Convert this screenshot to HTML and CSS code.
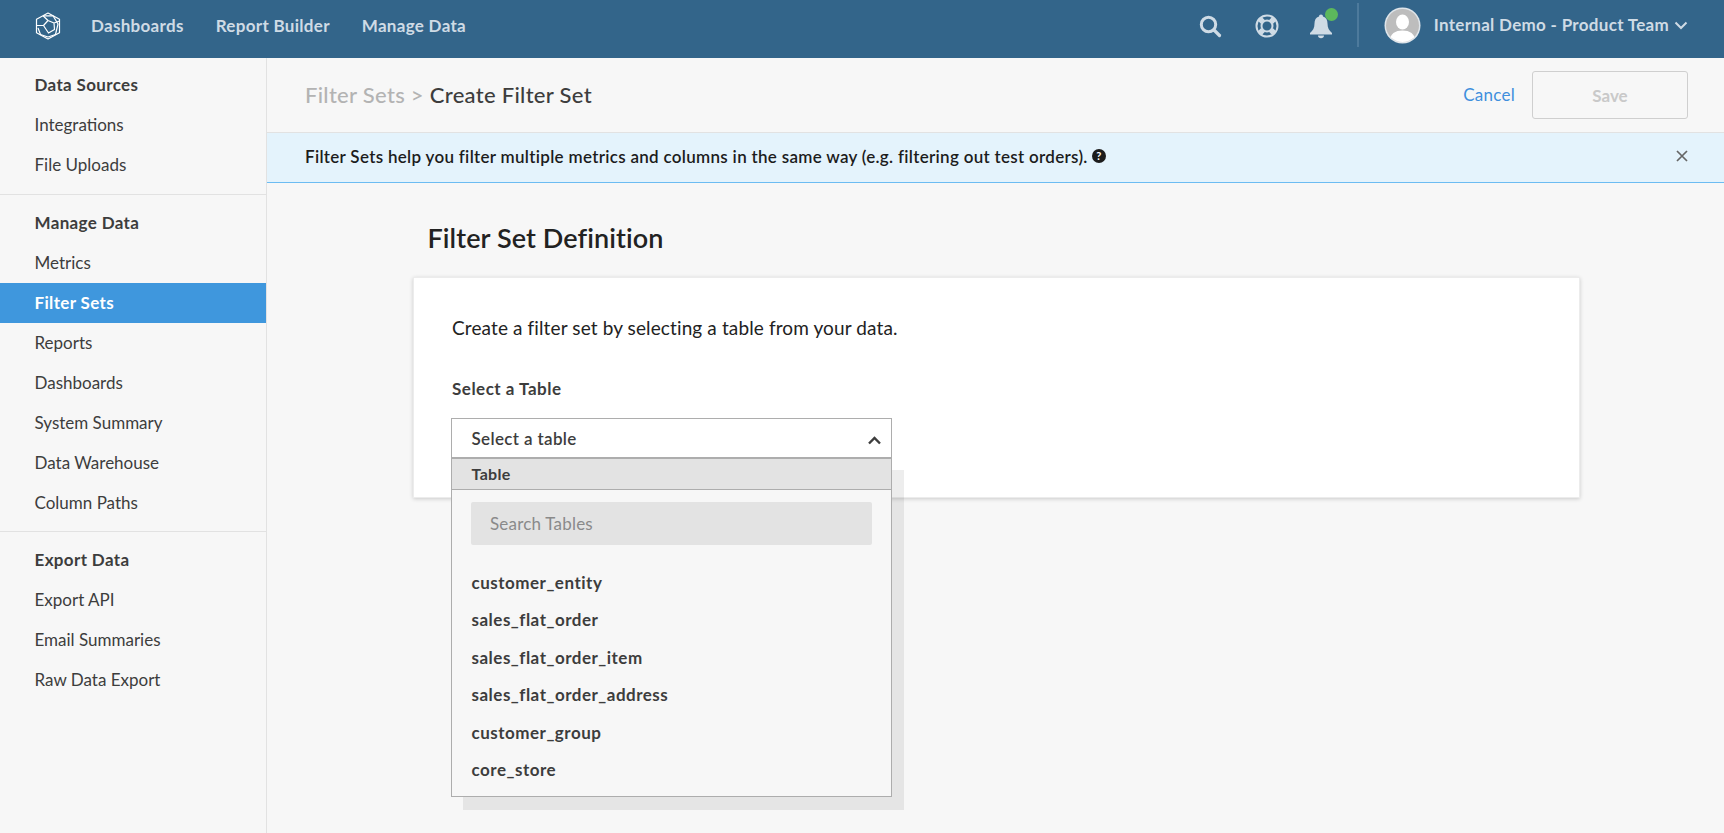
FILE: index.html
```html
<!DOCTYPE html>
<html lang="en">
<head>
<meta charset="utf-8">
<title>Create Filter Set</title>
<link rel="stylesheet" href="styles.css">
</head>
<body>
<header class="topbar">
  <svg class="logo" width="26" height="28" viewBox="0 0 26 28" fill="none" stroke="#fff" stroke-width="1.2" stroke-linejoin="round">
    <path d="M13 1 L24.500 7.200 V20.800 L13 27 L1.500 20.800 V7.200 Z"/>
    <path d="M8 3.800 L18 3.800 L23 12 L20.500 22.500 L13 25 L5.500 22.500 L3 16"/>
    <path d="M1.500 13.500 H8.500 L13 8.500 L19 11 L19.500 17.500 L13.500 21 L8.500 13.500 M13 8.500 L8 3.800 M19 11 L24.500 9"/>
  </svg>
  <nav class="mainnav">
    <a>Dashboards</a>
    <a>Report Builder</a>
    <a>Manage Data</a>
  </nav>
  <div class="tools">
    <svg class="tool-search" width="24" height="24" viewBox="0 0 24 24" fill="none" stroke="#cfdbe5" stroke-linecap="round">
      <circle cx="10.500" cy="10.500" r="7.200" stroke-width="3"/>
      <path d="M16 16 L21.500 21.500" stroke-width="3.200"/>
    </svg>
    <svg class="tool-help" width="24" height="24" viewBox="0 0 24 24" fill="none" stroke="#cfdbe5">
      <circle cx="12" cy="12" r="10.500" stroke-width="2"/>
      <circle cx="12" cy="12" r="5.500" stroke-width="2"/>
      <path d="M15.900 8.100 L19.400 4.600 M8.100 8.100 L4.600 4.600 M15.900 15.900 L19.400 19.400 M8.100 15.900 L4.600 19.400" stroke-width="5.500"/>
    </svg>
    <span class="bell">
      <svg width="24" height="26" viewBox="0 0 24 26" fill="#cfdbe5">
        <path d="M12 1.500 C13.200 1.500 14 2.400 14 3.400 C17.200 4.400 18.500 7 18.500 10.500 C18.500 15 20 17.500 23 20 V21.500 H1 V20 C4 17.500 5.500 15 5.500 10.500 C5.500 7 6.800 4.400 10 3.400 C10 2.400 10.800 1.500 12 1.500 Z"/>
        <path d="M9 22.500 H15 C15 24.200 13.700 25.200 12 25.200 C10.300 25.200 9 24.200 9 22.500 Z"/>
      </svg>
      <i class="dot"></i>
    </span>
    <span class="sep"></span>
    <svg class="avatar" width="37" height="37" viewBox="0 0 37 37">
      <defs><clipPath id="av"><circle cx="18.500" cy="18.500" r="16.500"/></clipPath></defs>
      <circle cx="18.500" cy="18.500" r="18" fill="#dfe5ea"/>
      <circle cx="18.500" cy="18.500" r="16.500" fill="#bdbdbd"/>
      <g clip-path="url(#av)" fill="#fff">
        <ellipse cx="18.500" cy="15" rx="6.500" ry="7.500"/>
        <path d="M5 37 C5 27 11 23.500 18.500 23.500 C26 23.500 32 27 32 37 Z"/>
      </g>
    </svg>
    <span class="account">Internal Demo - Product Team</span>
    <svg class="account-caret" width="14" height="9" viewBox="0 0 14 9" fill="none" stroke="#cfdbe5" stroke-width="2">
      <path d="M1.500 1.500 L7 7 L12.500 1.500"/>
    </svg>
  </div>
</header>

<div class="layout">
  <aside class="sidebar">
    <section class="side-group">
      <h3>Data Sources</h3>
      <a>Integrations</a>
      <a>File Uploads</a>
    </section>
    <section class="side-group">
      <h3>Manage Data</h3>
      <a>Metrics</a>
      <a class="active">Filter Sets</a>
      <a>Reports</a>
      <a>Dashboards</a>
      <a>System Summary</a>
      <a>Data Warehouse</a>
      <a>Column Paths</a>
    </section>
    <section class="side-group">
      <h3>Export Data</h3>
      <a>Export API</a>
      <a>Email Summaries</a>
      <a>Raw Data Export</a>
    </section>
  </aside>

  <main class="content">
    <div class="pagehead">
      <h1><span class="crumb">Filter Sets &gt;</span> Create Filter Set</h1>
      <a class="cancel">Cancel</a>
      <button class="save" type="button">Save</button>
    </div>
    <div class="banner">
      <p>Filter Sets help you filter multiple metrics and columns in the same way (e.g. filtering out test orders).</p>
      <span class="qmark">?</span>
      <svg class="close" width="12" height="12" viewBox="0 0 12 12" stroke="#666" stroke-width="1.700" fill="none">
        <path d="M1 1 L11 11 M11 1 L1 11"/>
      </svg>
    </div>
    <div class="body">
      <h2>Filter Set Definition</h2>
      <div class="card">
        <p class="intro">Create a filter set by selecting a table from your data.</p>
        <label class="field-label">Select a Table</label>
        <div class="select">
          <div class="select-box">
            <span>Select a table</span>
            <svg width="13" height="9" viewBox="0 0 13 9" fill="none" stroke="#3d3d3d" stroke-width="2.400">
              <path d="M1 7.500 L6.500 2 L12 7.500"/>
            </svg>
          </div>
          <div class="panel">
            <div class="panel-head">Table</div>
            <div class="search">Search Tables</div>
            <ul class="options">
              <li>customer_entity</li>
              <li>sales_flat_order</li>
              <li>sales_flat_order_item</li>
              <li>sales_flat_order_address</li>
              <li>customer_group</li>
              <li>core_store</li>
            </ul>
          </div>
        </div>
      </div>
    </div>
  </main>
</div>
</body>
</html>
```

FILE: styles.css
```css
* { box-sizing: border-box; }
html, body { margin: 0; height: 100%; }
body {
  font-family: Lato, "Open Sans", sans-serif;
  color: #3d3d3d;
  background: #f7f7f7;
  overflow: hidden;
}
h1, h2, h3, p, ul { margin: 0; padding: 0; }
.topbar {
  height: 58px;
  background: #33658a;
  display: flex;
  align-items: center;
  padding-left: 35px;
}
.logo { margin-top: -6px; }
.mainnav { display: flex; gap: 32px; margin-left: 30px; margin-top: -8px; }
.mainnav a { font-size: 17px; font-weight: 700; letter-spacing: .3px; color: #cfdbe5; }
.tools { margin-left: auto; display: flex; align-items: center; height: 100%; padding-right: 36px; }
.tool-search { margin-top: -6px; }
.tool-help { margin-left: 33px; margin-top: -6px; }
.bell { position: relative; display: block; margin-left: 30px; height: 26px; margin-top: -6px; }
.dot { position: absolute; right: -5px; top: -5px; width: 13px; height: 13px; border-radius: 50%; background: #5cb85c; }
.sep { width: 2px; height: 44px; background: #4d7a9c; margin-left: 24px; margin-top: -8px; }
.avatar { margin-left: 25px; margin-top: -8px; }
.account { margin-left: 13px; font-size: 17px; font-weight: 700; letter-spacing: .3px; color: #cfdbe5; margin-top: -9px; }
.account-caret { margin-left: 5px; margin-top: -7px; }

.layout { display: flex; height: calc(100vh - 58px); }
.sidebar { width: 267px; flex: none; border-right: 1px solid #e2e2e2; background: #f7f7f7; }
.side-group { padding: 8px 0 8px; border-bottom: 1px solid #e2e2e2; }
.side-group:first-child { padding: 7px 0 9px; }
.side-group:last-child { border-bottom: 0; }
.side-group h3, .side-group a {
  display: flex;
  align-items: center;
  height: 40px;
  padding: 0 0 1px 34.500px;
  font-size: 17px;
}
.side-group h3 { font-weight: 700; letter-spacing: .35px; }
.side-group a.active { background: #3f97dd; color: #fff; font-weight: 700; letter-spacing: .35px; }

.content { flex: 1; min-width: 0; }
.pagehead {
  height: 75px;
  display: flex;
  align-items: center;
  padding: 0 36px 2px 38px;
  border-bottom: 1px solid #e2e2e2;
}
.pagehead h1 { font-size: 22px; font-weight: 500; letter-spacing: .3px; color: #3d3d3d; flex: 1; }
.crumb { color: #b3b3b3; }
.cancel { font-size: 17px; letter-spacing: .25px; color: #3f8fdd; margin-right: 17px; }
.save {
  width: 156px;
  height: 48px;
  margin-top: 2px;
  background: transparent;
  border: 1px solid #cfcfcf;
  border-radius: 3px;
  font: 700 17px Lato, sans-serif;
  color: #c9c9c9;
}
.banner {
  height: 50px;
  padding: 0 36px 3px 38px;
  background: #e4f3fc;
  border-bottom: 1px solid #6cbcf2;
  display: flex;
  align-items: center;
  color: #1c1c1c;
}
.banner p { font-size: 17px; font-weight: 600; letter-spacing: .3px; }
.qmark {
  width: 14px;
  height: 14px;
  margin-left: 4px;
  border-radius: 50%;
  background: #1c1c1c;
  color: #fff;
  font-size: 11px;
  font-weight: 700;
  line-height: 14px;
  text-align: center;
}
.close { margin-left: auto; }
.body { padding: 37px 0 0 146px; }
.body h2 { font-size: 27px; font-weight: 600; letter-spacing: .1px; color: #222; margin-left: 14.500px; line-height: 36px; }
.card {
  width: 1167px;
  height: 221px;
  margin-top: 21px;
  background: #fff;
  border: 1px solid #ececec;
  box-shadow: 0 1px 4px rgba(0,0,0,.18);
  padding: 37px 38px 0;
}
.intro { font-size: 19px; letter-spacing: .12px; line-height: 26px; color: #222; }
.field-label { display: block; margin-top: 38px; font-size: 17px; font-weight: 700; letter-spacing: .5px; line-height: 20px; }
.select { position: relative; width: 441px; margin-top: 19px; margin-left: -1px; }
.select-box {
  height: 40px;
  background: #fff;
  border: 1px solid #adadad;
  display: flex;
  align-items: center;
  justify-content: space-between;
  padding: 0 10px 0 19.500px;
  font-size: 17px;
  font-weight: 600;
  letter-spacing: .35px;
}
.select-box svg { margin-top: 4px; }
.panel {
  position: absolute;
  left: 0;
  top: 39px;
  width: 441px;
  height: 340px;
  background: #f7f7f7;
  border: 1px solid #adadad;
  box-shadow: 12px 13px 0 rgba(0,0,0,.07);
}
.panel-head {
  height: 32px;
  background: #e3e3e3;
  border-bottom: 1px solid #adadad;
  border-top: 1px solid #adadad;
  padding-left: 19.500px;
  font-size: 16px;
  font-weight: 700;
  letter-spacing: .3px;
  line-height: 30px;
}
.search {
  margin: 12px 19px 0 19px;
  height: 43px;
  background: #e3e3e3;
  border-radius: 2px;
  padding-left: 19px;
  font-size: 17px;
  letter-spacing: .2px;
  line-height: 43px;
  color: #8a8a8a;
}
.options { list-style: none; margin-top: 19px; }
.options li {
  height: 37.400px;
  line-height: 37.400px;
  padding-left: 19.500px;
  font-size: 17px;
  font-weight: 700;
  letter-spacing: .5px;
}
```
